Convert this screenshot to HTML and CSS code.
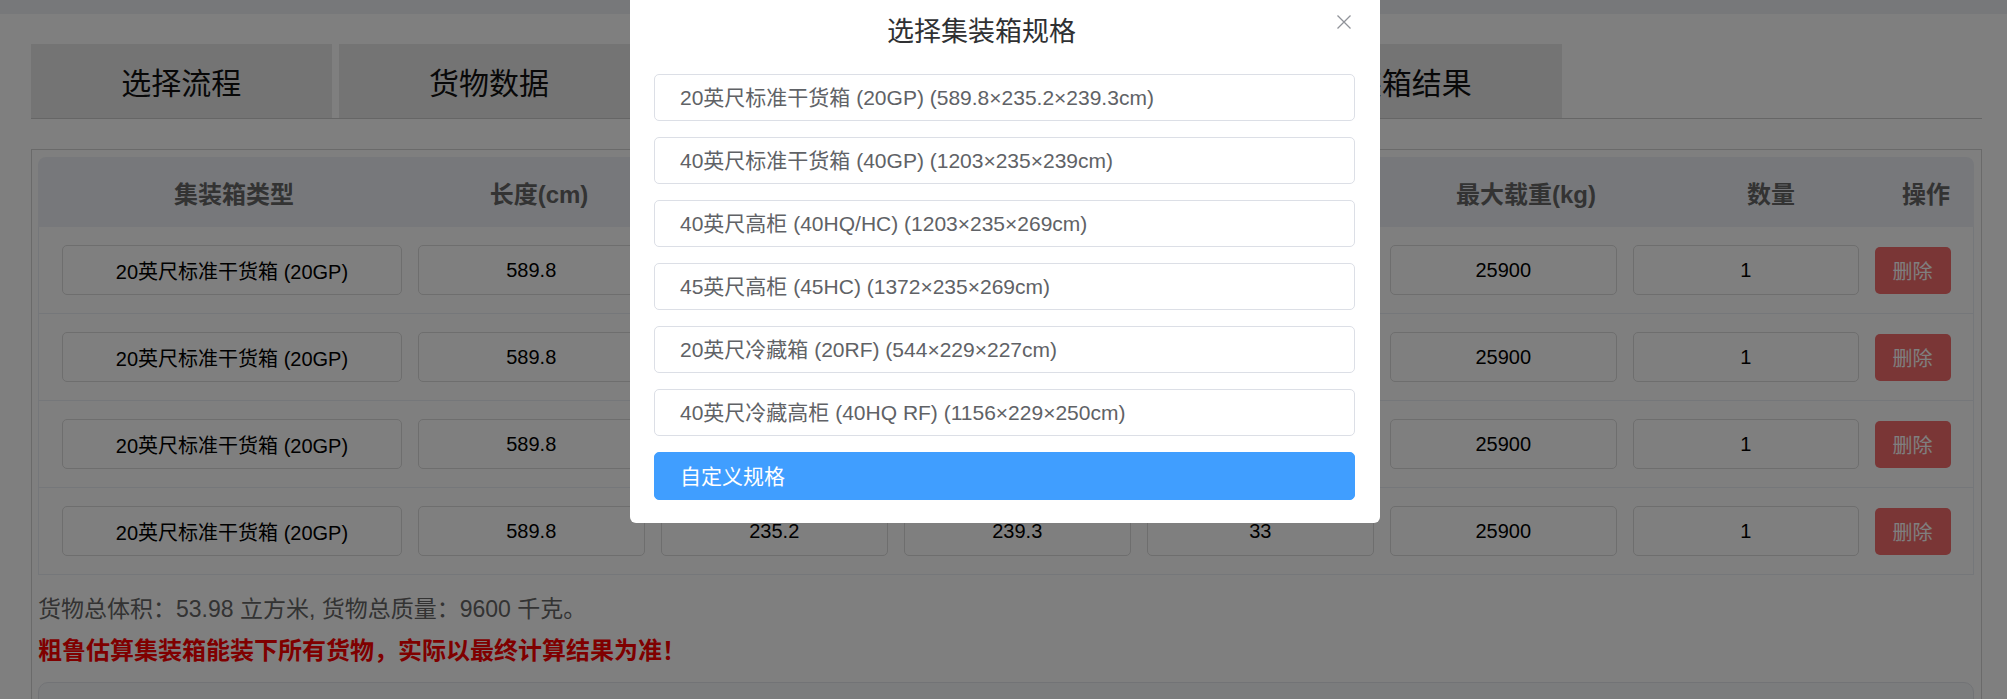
FILE: index.html
```html
<!DOCTYPE html>
<html lang="zh-CN">
<head>
<meta charset="utf-8">
<title>装箱计算</title>
<link rel="stylesheet" href="styles.css">
</head>
<body>
<div class="topbar"></div>
<div class="page">
  <div class="tabs">
    <div class="tab">选择流程</div>
    <div class="tab">货物数据</div>
    <div class="tab">集装箱数据</div>
    <div class="tab">装箱参数</div>
    <div class="tab">装箱结果</div>
  </div>
  <div class="panel">
    <div class="table">
      <div class="thead">
        <div class="th">集装箱类型</div>
        <div class="th">长度(cm)</div>
        <div class="th">宽度(cm)</div>
        <div class="th">高度(cm)</div>
        <div class="th">最大体积(m³)</div>
        <div class="th">最大载重(kg)</div>
        <div class="th">数量</div>
        <div class="th">操作</div>
      </div>
      <div class="row">
        <div class="input">20英尺标准干货箱 (20GP)</div>
        <div class="input">589.8</div>
        <div class="input">235.2</div>
        <div class="input">239.3</div>
        <div class="input">33</div>
        <div class="input">25900</div>
        <div class="input">1</div>
        <button class="del">删除</button>
      </div>
      <div class="row">
        <div class="input">20英尺标准干货箱 (20GP)</div>
        <div class="input">589.8</div>
        <div class="input">235.2</div>
        <div class="input">239.3</div>
        <div class="input">33</div>
        <div class="input">25900</div>
        <div class="input">1</div>
        <button class="del">删除</button>
      </div>
      <div class="row">
        <div class="input">20英尺标准干货箱 (20GP)</div>
        <div class="input">589.8</div>
        <div class="input">235.2</div>
        <div class="input">239.3</div>
        <div class="input">33</div>
        <div class="input">25900</div>
        <div class="input">1</div>
        <button class="del">删除</button>
      </div>
      <div class="row">
        <div class="input">20英尺标准干货箱 (20GP)</div>
        <div class="input">589.8</div>
        <div class="input">235.2</div>
        <div class="input">239.3</div>
        <div class="input">33</div>
        <div class="input">25900</div>
        <div class="input">1</div>
        <button class="del">删除</button>
      </div>
    </div>
    <p class="summary">货物总体积：53.98 立方米, 货物总质量：9600 千克。</p>
    <p class="warn">粗鲁估算集装箱能装下所有货物，实际以最终计算结果为准！</p>
    <div class="box"></div>
  </div>
</div>

<div class="mask"></div>
<div class="dialog">
  <div class="dialog-title">选择集装箱规格</div>
  <button class="close" aria-label="关闭">
    <svg width="14" height="14" viewBox="0 0 14 14"><path d="M0.5 0.5 L13.5 13.5 M13.5 0.5 L0.5 13.5" stroke="#909399" stroke-width="1.3" fill="none"/></svg>
  </button>
  <div class="options">
    <div class="option">20英尺标准干货箱 (20GP) (589.8×235.2×239.3cm)</div>
    <div class="option">40英尺标准干货箱 (40GP) (1203×235×239cm)</div>
    <div class="option">40英尺高柜 (40HQ/HC) (1203×235×269cm)</div>
    <div class="option">45英尺高柜 (45HC) (1372×235×269cm)</div>
    <div class="option">20英尺冷藏箱 (20RF) (544×229×227cm)</div>
    <div class="option">40英尺冷藏高柜 (40HQ RF) (1156×229×250cm)</div>
    <div class="option option-primary">自定义规格</div>
  </div>
</div>
</body>
</html>
```

FILE: styles.css
```css
* { box-sizing: border-box; }

html, body {
  margin: 0;
  padding: 0;
  background: #ffffff;
  font-family: "Liberation Sans", "Noto Sans CJK SC", sans-serif;
  overflow: hidden;
}

.topbar {
  height: 14px;
  background: #eef0f4;
}

.page {
  padding: 30px 25px 0 31px;
}

.tabs {
  display: flex;
  gap: 7px;
  border-bottom: 1px solid #cccccc;
}

.tab {
  width: 300.6px;
  height: 74px;
  background: #e8e8e8;
  display: flex;
  align-items: center;
  justify-content: center;
  font-size: 30px;
  color: #111111;
}

.panel {
  margin-top: 30px;
  border: 1px solid #d4d4d4;
  border-bottom: none;
  padding: 7px 7px 0 6px;
  background: #ffffff;
}

.table {
  border-radius: 8px 8px 0 0;
}

.thead {
  height: 70px;
  background: #eef1f6;
  border-radius: 8px 8px 0 0;
  display: grid;
  grid-template-columns: 392px 218px 245px 245px 250px 276px 214px 1fr;
  align-items: center;
}

.th {
  text-align: center;
  font-size: 24px;
  font-weight: bold;
  color: #666666;
  white-space: nowrap;
}

.row {
  height: 87px;
  border: 1px solid #ebeef5;
  border-top: none;
  padding-left: 23px;
  display: grid;
  grid-template-columns: 340px repeat(5, 227.5px) 226.5px 76px;
  column-gap: 15.5px;
  align-items: center;
}

.input {
  height: 50px;
  border: 1px solid #dcdcdc;
  border-radius: 5px;
  display: flex;
  align-items: center;
  justify-content: center;
  font-size: 20px;
  color: #000000;
  white-space: nowrap;
}

.del {
  height: 47px;
  border: none;
  border-radius: 5px;
  background: #f56c6c;
  color: #ffffff;
  font-family: inherit;
  font-size: 20px;
  padding: 0;
}

.summary {
  margin: 18px 0 0 0;
  font-size: 23px;
  line-height: 32px;
  color: #666666;
}

.warn {
  margin: 10px 0 0 0;
  font-size: 24px;
  line-height: 32px;
  font-weight: bold;
  color: #ff0000;
}

.box {
  margin-top: 15px;
  height: 120px;
  background: #f7f8fa;
  border: 1px solid #e4e7ed;
  border-radius: 10px;
}

/* overlay + dialog */
.mask {
  position: fixed;
  inset: 0;
  background: rgba(0, 0, 0, 0.5);
}

.dialog {
  position: fixed;
  top: 0;
  left: 630px;
  width: 750px;
  background: #ffffff;
  border-radius: 0 0 6px 6px;
  padding: 14px 25px 23px 24px;
}

.dialog-title {
  height: 36px;
  line-height: 36px;
  font-size: 27px;
  color: #303133;
  text-align: center;
  padding-right: 46px;
  margin-bottom: 24px;
}

.close {
  position: absolute;
  top: 15px;
  right: 29px;
  width: 14px;
  height: 14px;
  padding: 0;
  border: none;
  background: transparent;
  display: block;
}

.close svg { display: block; }

.options {
  display: flex;
  flex-direction: column;
  gap: 16px;
}

.option {
  height: 47px;
  border: 1px solid #dcdfe6;
  border-radius: 5px;
  padding: 0 0 3px 25px;
  display: flex;
  align-items: center;
  font-size: 21px;
  color: #606266;
  white-space: nowrap;
}

.option-primary {
  height: 48px;
  background: #409eff;
  border-color: #409eff;
  color: #ffffff;
}
```
